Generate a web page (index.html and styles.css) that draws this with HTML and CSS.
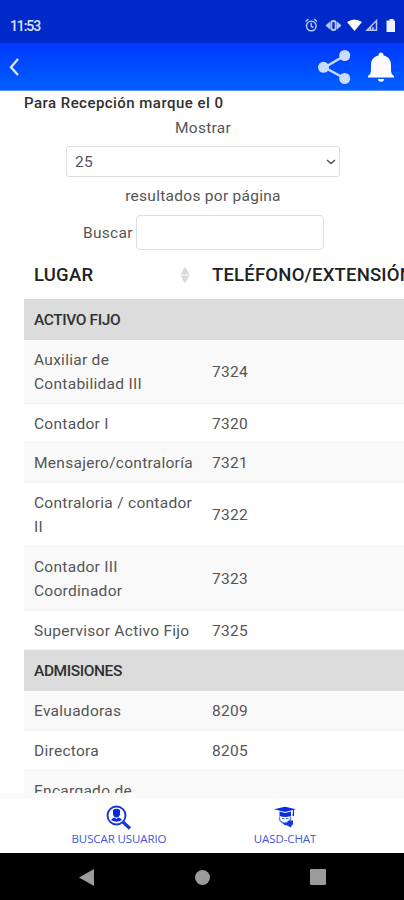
FILE: index.html
```
<!DOCTYPE html>
<html lang="es">
<head>
<meta charset="utf-8">
<title>Directorio</title>
<link rel="stylesheet" href="styles.css">
</head>
<body>
<div class="status">
  <span class="time">11:53</span>
  <svg class="status-icons" width="94" height="18" viewBox="0 0 94 18">
    <g fill="none" stroke="#b9c6f6" stroke-width="1.5">
      <circle cx="8.300" cy="10" r="4.800"/><path d="M2.500 5.500 5.500 3M14 5.500 11 3M8.300 7v3.300l2 1.200"/>
      <rect x="28.300" y="5" width="4.400" height="9" rx="2" stroke-width="2"/>
      <path d="M64 14.300h9.500V4.500zM67.500 14v-3M70 11v3"/>
    </g>
    <path d="M22.500 9.500l4.500-4v8zM38.500 9.500l-4.500-4v8z" fill="#b9c6f6"/>
    <path d="M44 6q7.500-5 15 0l-7.500 9z" fill="#fff"/>
    <path d="M84.500 4.500h2V3h4v1.500h1.500V16H83.500V4.500z" fill="#eef1ff"/>
  </svg>
</div>
<header class="appbar">
  <svg width="12" height="20" viewBox="0 0 12 20"><path d="M10 2 3 10.200l7 7.800" fill="none" stroke="#dbe6ff" stroke-width="2.300"/></svg>
  <div class="actions">
    <svg width="34" height="36" viewBox="0 0 34 36"><g fill="#ccdcff"><path d="M27 6.500 6.500 18.500l20.500 11" fill="none" stroke="#ccdcff" stroke-width="2.400"/><circle cx="26.700" cy="6.500" r="5.500"/><circle cx="5.500" cy="18.300" r="5.500"/><circle cx="26.700" cy="29.500" r="5.500"/></g></svg>
    <svg width="28" height="32" viewBox="0 0 28 32"><path d="M14 1.500a2.500 2.500 0 0 1 2.500 3C21.500 5.800 24 9 24 14v6q0 3 3 5v1.500H1V25q3-2 3-5v-6c0-5 2.500-8.200 7.500-9.500a2.500 2.500 0 0 1 2.500-3zM11 28h6a3 2.700 0 0 1-6 0z" fill="#fafbff"/></svg>
  </div>
</header>
<main class="content">
  <p class="intro">Para Recepción marque el 0</p>
  <div class="length">
    <span>Mostrar</span>
    <div class="select"><span>25</span><svg width="10" height="6" viewBox="0 0 10 6"><path d="m1 1 4 3.500L9 1" fill="none" stroke="#555" stroke-width="1.500"/></svg></div>
    <span>resultados por página</span>
  </div>
  <label class="search"><span>Buscar</span><input type="text"></label>
  <div class="table">
    <div class="row head"><div>LUGAR<svg class="sort" width="10" height="18" viewBox="0 0 10 18"><path d="M5 .5l4.500 8h-9zM5 17.500l4.500-8h-9z" fill="#dadada"/></svg></div><div>TELÉFONO/EXTENSIÓN</div></div>
    <div class="row group"><div>ACTIVO FIJO</div></div>
    <div class="row tall odd"><div>Auxiliar de<br>Contabilidad III</div><div>7324</div></div>
    <div class="row"><div>Contador I</div><div>7320</div></div>
    <div class="row odd"><div>Mensajero/contraloría</div><div>7321</div></div>
    <div class="row tall"><div>Contraloria / contador<br>II</div><div>7322</div></div>
    <div class="row tall odd"><div>Contador III<br>Coordinador</div><div>7323</div></div>
    <div class="row"><div>Supervisor Activo Fijo</div><div>7325</div></div>
    <div class="row group"><div>ADMISIONES</div></div>
    <div class="row odd"><div>Evaluadoras</div><div>8209</div></div>
    <div class="row"><div>Directora</div><div>8205</div></div>
    <div class="row tall odd last"><div>Encargado de</div></div>
  </div>
</main>
<nav class="tabs">
  <div class="tab user">
    <svg width="26" height="25" viewBox="0 0 26 25"><circle cx="10.500" cy="10.500" r="9" fill="none" stroke="#1638d8" stroke-width="1.900"/><path d="m17 17 7 6.500" stroke="#1638d8" stroke-width="3.200"/><path d="M7 5q3.500-2.500 7 0v4.500q-.8 3-3.500 3T7 9.500zM5 15q1.500-2.500 3.500-2.500l2 1.500 2-1.500q2 0 3.500 2.500-5.500 3.500-11 0z" fill="#0b2be0"/></svg>
    <span>BUSCAR USUARIO</span>
  </div>
  <div class="tab chat">
    <svg width="24" height="22" viewBox="0 0 24 22"><path d="M1 3.200 12 .8l11 2.400L12 6z" fill="#0b2be0"/><path d="M6.500 5.500 12 7l6-1.500V10q-6 2-11.500 0zM20 4h1v6h-1.500z" fill="#0b2be0"/><path d="M6.500 10.500v3q1 3 4.500 3.500t6.500-3.500v-3" fill="none" stroke="#6d83e8" stroke-width="1.300"/><path d="M9 16.500q3 1.200 5.500 0l1.500-2h4v3.500l-2.500 3.500-3-2q-3 .5-5.500-3z" fill="#1638d8"/><path d="M9 12.500h2.500M13 12.500h2.500" stroke="#4560df"/></svg>
    <span>UASD-CHAT</span>
  </div>
</nav>
<footer class="system">
  <svg width="15" height="17" viewBox="0 0 15 17"><path d="M15 0v17L0 8.500z" fill="#9b9b9b"/></svg>
  <svg width="15" height="15" viewBox="0 0 15 15"><circle cx="7.500" cy="7.500" r="7.500" fill="#9b9b9b"/></svg>
  <svg width="16" height="16" viewBox="0 0 16 16"><rect width="16" height="16" rx="1" fill="#9b9b9b"/></svg>
</footer>
</body>
</html>
```

FILE: styles.css
```
* { box-sizing: border-box; }
body { margin: 0; width: 404px; height: 900px; overflow: hidden; display: flex; flex-direction: column; background: #fff; font: 15.5px/24px Roboto, sans-serif; letter-spacing: .28px; color: #555; }
svg { display: block; flex: none; }
.status { height: 43px; flex: none; background: #0029ca; display: flex; justify-content: space-between; align-items: flex-start; padding: 16px 7px 0 10px; }
.time { color: #dce3ff; font-size: 14px; line-height: 20px; letter-spacing: -1.1px; font-weight: 500; }
.appbar { height: 48px; flex: none; background: linear-gradient(#0038ff, #0060ff); border-bottom: 1px solid #5b90f5; display: flex; align-items: center; justify-content: space-between; padding: 0 9px 0 8px; }
.actions { display: flex; gap: 15px; align-items: center; }
.content { height: 702px; flex: none; overflow: hidden; padding-left: 24px; }
.intro { margin: 0; line-height: 25px; color: #303030; font-weight: 500; font-size: 15px; letter-spacing: .46px; }
.length { display: flex; flex-direction: column; align-items: center; width: 358px; }
.select { width: 274px; height: 31px; margin: 6px 0 7px; border: 1px solid #ddd; border-radius: 3px; display: flex; align-items: center; justify-content: space-between; padding: 0 3px 0 8px; }
.search { display: flex; align-items: center; gap: 3px; margin: 7px 0 0 59px; }
.search input { width: 188px; height: 35px; border: 1px solid #ddd; border-radius: 4px; padding: 0; background: #fff; }
.table { width: 420px; }
.row { height: 39.8px; display: grid; grid-template-columns: 178px 1fr; align-items: center; border-bottom: 1px solid #f2f2f2; white-space: nowrap; }
.row > div { padding: 1px 10px 0; }
.row.tall { height: 63.7px; }
.row.odd { background: #f9f9f9; }
.row.last { align-items: start; padding-top: 7px; }
.row.head { height: 49px; border: 0; color: #222; font-weight: 500; font-size: 18.5px; letter-spacing: .2px; }
.row.head > div { display: flex; align-items: center; justify-content: space-between; padding-top: 0; }
.sort { margin-right: 2px; }
.row.group { height: 41px; border: 0; background: #dcdcdc; color: #303030; font-weight: 500; letter-spacing: -.4px; }
.row.group > div { padding-top: 0; }
.tabs { height: 60px; flex: none; border-top: 5px solid #fafafa; background: #fff; display: flex; }
.tab { display: flex; flex-direction: column; align-items: center; color: #3c57db; font: 11.5px/14px "Open Sans", sans-serif; letter-spacing: -.1px; }
.user { width: 238px; padding-top: 7px; gap: 2px; }
.chat { width: 94px; padding-top: 8px; gap: 4px; }
.system { height: 47px; flex: none; background: #000; display: flex; justify-content: space-between; align-items: center; padding: 1px 78px 0 79px; }
```
